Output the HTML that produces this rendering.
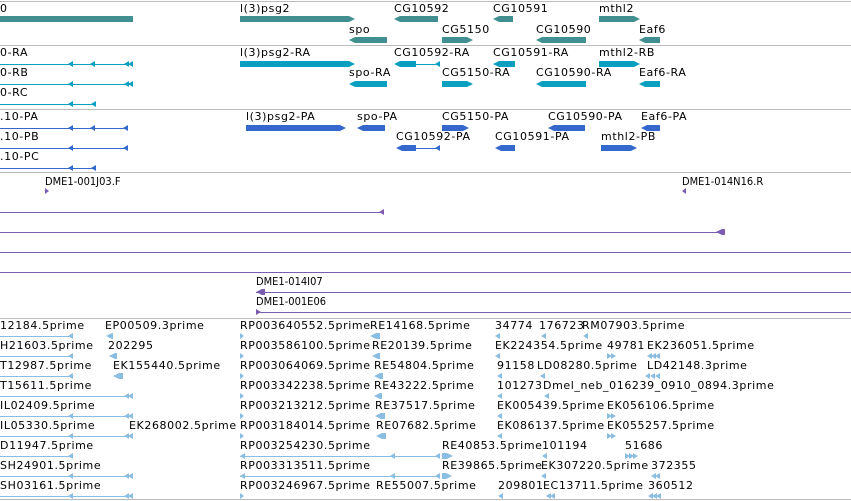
<!DOCTYPE html>
<html><head><style>
body{margin:0;width:851px;height:501px;overflow:hidden;background:#fff;position:relative;font-family:"DejaVu Sans","Liberation Sans",sans-serif}
.t{position:absolute;font-size:11px;line-height:13px;letter-spacing:.6px;white-space:nowrap;color:#000}
.s{position:absolute;font-size:11px;line-height:13px;letter-spacing:0;white-space:nowrap;color:#000;transform:scaleX(.9);transform-origin:left}
.h{position:absolute;left:0;width:851px;height:1px;background:#bbb}
.l{position:absolute;height:1px}
.b{position:absolute}
.L{clip-path:polygon(6px 0,100% 0,100% 100%,6px 100%,0 50%)}
.R{clip-path:polygon(0 0,calc(100% - 6px) 0,100% 50%,calc(100% - 6px) 100%,0 100%)}
.al{position:absolute;width:0;height:0;border-top:3px solid transparent;border-bottom:3px solid transparent;border-right:5px solid}
.ar{position:absolute;width:0;height:0;border-top:3px solid transparent;border-bottom:3px solid transparent;border-left:5px solid}
.g{background:#418f90}.c{background:#0ca0c0}.u{background:#3468cc}.p{background:#7a5cb0}.e{background:#8abde2}
</style></head><body>
<div class="h" style="top:1px"></div>
<div class="h" style="top:45px"></div>
<div class="h" style="top:109px"></div>
<div class="h" style="top:172px"></div>
<div class="h" style="top:318px"></div>
<div class="h" style="top:499px"></div>

<div class="t" style="left:0;top:2px">0</div>
<div class="b g" style="left:0;top:16px;width:133px;height:6px"></div>
<div class="t" style="left:240px;top:2px">l(3)psg2</div>
<div class="b g R" style="left:240px;top:16px;width:115px;height:6px"></div>
<div class="t" style="left:349px;top:23px">spo</div>
<div class="b g L" style="left:349px;top:37px;width:38px;height:6px"></div>
<div class="t" style="left:394px;top:2px">CG10592</div>
<div class="b g L" style="left:394px;top:16px;width:44px;height:6px"></div>
<div class="t" style="left:442px;top:23px">CG5150</div>
<div class="b g R" style="left:442px;top:37px;width:31px;height:6px"></div>
<div class="t" style="left:493px;top:2px">CG10591</div>
<div class="b g L" style="left:493px;top:16px;width:20px;height:6px"></div>
<div class="t" style="left:536px;top:23px">CG10590</div>
<div class="b g L" style="left:536px;top:37px;width:50px;height:6px"></div>
<div class="t" style="left:599px;top:2px">mthl2</div>
<div class="b g R" style="left:599px;top:16px;width:41px;height:6px"></div>
<div class="t" style="left:639px;top:23px">Eaf6</div>
<div class="b g L" style="left:639px;top:37px;width:21px;height:6px"></div>

<div class="t" style="left:0;top:46px">0-RA</div>
<div class="l c" style="left:0;top:64px;width:133px"></div>
<div class="al" style="left:68px;top:61px;color:#0ca0c0"></div><div class="al" style="left:90px;top:61px;color:#0ca0c0"></div><div class="al" style="left:124px;top:61px;color:#0ca0c0"></div><div class="al" style="left:128px;top:61px;color:#0ca0c0"></div>
<div class="t" style="left:0;top:66px">0-RB</div>
<div class="l c" style="left:0;top:84px;width:133px"></div>
<div class="al" style="left:68px;top:81px;color:#0ca0c0"></div><div class="al" style="left:124px;top:81px;color:#0ca0c0"></div><div class="al" style="left:128px;top:81px;color:#0ca0c0"></div>
<div class="t" style="left:0;top:86px">0-RC</div>
<div class="l c" style="left:0;top:104px;width:96px"></div>
<div class="al" style="left:68px;top:101px;color:#0ca0c0"></div><div class="al" style="left:91px;top:101px;color:#0ca0c0"></div>
<div class="t" style="left:240px;top:46px">l(3)psg2-RA</div>
<div class="b c R" style="left:240px;top:61px;width:115px;height:6px"></div>
<div class="t" style="left:349px;top:66px">spo-RA</div>
<div class="b c L" style="left:349px;top:81px;width:38px;height:6px"></div>
<div class="t" style="left:394px;top:46px">CG10592-RA</div>
<div class="b c L" style="left:394px;top:61px;width:22px;height:6px"></div>
<div class="l c" style="left:410px;top:64px;width:30px"></div><div class="al" style="left:435px;top:61px;color:#0ca0c0"></div>
<div class="t" style="left:442px;top:66px">CG5150-RA</div>
<div class="b c R" style="left:442px;top:81px;width:31px;height:6px"></div>
<div class="t" style="left:493px;top:46px">CG10591-RA</div>
<div class="b c L" style="left:493px;top:61px;width:22px;height:6px"></div>
<div class="t" style="left:536px;top:66px">CG10590-RA</div>
<div class="b c L" style="left:536px;top:81px;width:50px;height:6px"></div>
<div class="t" style="left:599px;top:46px">mthl2-RB</div>
<div class="b c R" style="left:599px;top:61px;width:41px;height:6px"></div>
<div class="t" style="left:639px;top:66px">Eaf6-RA</div>
<div class="b c L" style="left:639px;top:81px;width:21px;height:6px"></div>

<div class="t" style="left:0;top:110px">.10-PA</div>
<div class="l u" style="left:0;top:128px;width:128px"></div>
<div class="al" style="left:68px;top:125px;color:#3468cc"></div><div class="al" style="left:90px;top:125px;color:#3468cc"></div><div class="al" style="left:123px;top:125px;color:#3468cc"></div>
<div class="t" style="left:0;top:130px">.10-PB</div>
<div class="l u" style="left:0;top:148px;width:128px"></div>
<div class="al" style="left:68px;top:145px;color:#3468cc"></div><div class="al" style="left:123px;top:145px;color:#3468cc"></div>
<div class="t" style="left:0;top:150px">.10-PC</div>
<div class="l u" style="left:0;top:168px;width:96px"></div>
<div class="al" style="left:68px;top:165px;color:#3468cc"></div><div class="al" style="left:91px;top:165px;color:#3468cc"></div>
<div class="t" style="left:246px;top:110px">l(3)psg2-PA</div>
<div class="b u R" style="left:246px;top:125px;width:100px;height:6px"></div>
<div class="t" style="left:357px;top:110px">spo-PA</div>
<div class="b u L" style="left:357px;top:125px;width:28px;height:6px"></div>
<div class="t" style="left:442px;top:110px">CG5150-PA</div>
<div class="b u R" style="left:442px;top:125px;width:27px;height:6px"></div>
<div class="t" style="left:548px;top:110px">CG10590-PA</div>
<div class="b u L" style="left:548px;top:125px;width:37px;height:6px"></div>
<div class="t" style="left:641px;top:110px">Eaf6-PA</div>
<div class="b u L" style="left:641px;top:125px;width:19px;height:6px"></div>
<div class="t" style="left:396px;top:130px">CG10592-PA</div>
<div class="b u L" style="left:396px;top:145px;width:20px;height:6px"></div>
<div class="l u" style="left:410px;top:148px;width:30px"></div><div class="al" style="left:435px;top:145px;color:#3468cc"></div>
<div class="t" style="left:495px;top:130px">CG10591-PA</div>
<div class="b u L" style="left:495px;top:145px;width:20px;height:6px"></div>
<div class="t" style="left:601px;top:130px">mthl2-PB</div>
<div class="b u R" style="left:601px;top:145px;width:36px;height:6px"></div>

<div class="s" style="left:45px;top:175px">DME1-001J03.F</div>
<div class="ar" style="left:45px;top:188px;color:#7a5cb0;border-left-width:4px"></div>
<div class="s" style="left:682px;top:175px">DME1-014N16.R</div>
<div class="al" style="left:682px;top:188px;color:#7a5cb0;border-right-width:4px"></div>
<div class="l p" style="left:0;top:212px;width:384px"></div><div class="al" style="left:379px;top:209px;color:#7a5cb0"></div>
<div class="l p" style="left:0;top:232px;width:725px"></div><div class="b p L" style="left:716px;top:229px;width:9px;height:6px"></div>
<div class="l p" style="left:0;top:252px;width:851px"></div>
<div class="l p" style="left:0;top:272px;width:851px"></div>
<div class="s" style="left:256px;top:275px">DME1-014I07</div>
<div class="l p" style="left:256px;top:292px;width:595px"></div><div class="b p L" style="left:256px;top:289px;width:9px;height:6px"></div>
<div class="s" style="left:256px;top:295px">DME1-001E06</div>
<div class="l p" style="left:256px;top:312px;width:595px"></div><div class="ar" style="left:256px;top:309px;color:#7a5cb0"></div>

<div class="t" style="left:0;top:319px">12184.5prime</div>
<div class="t" style="left:0;top:339px">H21603.5prime</div>
<div class="t" style="left:0;top:359px">T12987.5prime</div>
<div class="t" style="left:0;top:379px">T15611.5prime</div>
<div class="t" style="left:0;top:399px">IL02409.5prime</div>
<div class="t" style="left:0;top:419px">IL05330.5prime</div>
<div class="t" style="left:0;top:439px">D11947.5prime</div>
<div class="t" style="left:0;top:459px">SH24901.5prime</div>
<div class="t" style="left:0;top:479px">SH03161.5prime</div>
<div class="l e" style="left:0;top:336px;width:73px"></div><div class="al" style="left:68px;top:333px;color:#8abde2"></div>
<div class="l e" style="left:0;top:356px;width:73px"></div><div class="al" style="left:68px;top:353px;color:#8abde2"></div>
<div class="l e" style="left:0;top:376px;width:73px"></div><div class="al" style="left:68px;top:373px;color:#8abde2"></div>
<div class="l e" style="left:0;top:396px;width:133px"></div><div class="al" style="left:124px;top:393px;color:#8abde2"></div><div class="al" style="left:128px;top:393px;color:#8abde2"></div>
<div class="l e" style="left:0;top:416px;width:133px"></div><div class="al" style="left:68px;top:413px;color:#8abde2"></div><div class="al" style="left:124px;top:413px;color:#8abde2"></div><div class="al" style="left:128px;top:413px;color:#8abde2"></div>
<div class="l e" style="left:0;top:436px;width:133px"></div><div class="al" style="left:68px;top:433px;color:#8abde2"></div><div class="al" style="left:124px;top:433px;color:#8abde2"></div><div class="al" style="left:128px;top:433px;color:#8abde2"></div>
<div class="l e" style="left:0;top:456px;width:73px"></div><div class="al" style="left:68px;top:453px;color:#8abde2"></div>
<div class="l e" style="left:0;top:476px;width:133px"></div><div class="al" style="left:68px;top:473px;color:#8abde2"></div><div class="al" style="left:124px;top:473px;color:#8abde2"></div><div class="al" style="left:128px;top:473px;color:#8abde2"></div>
<div class="l e" style="left:0;top:496px;width:133px"></div><div class="al" style="left:68px;top:493px;color:#8abde2"></div><div class="al" style="left:124px;top:493px;color:#8abde2"></div><div class="al" style="left:128px;top:493px;color:#8abde2"></div>

<div class="t" style="left:105px;top:319px">EP00509.3prime</div><div class="b e L" style="left:106px;top:333px;width:7px;height:6px"></div>
<div class="t" style="left:108px;top:339px">202295</div><div class="b e L" style="left:109px;top:353px;width:8px;height:6px"></div>
<div class="t" style="left:113px;top:359px">EK155440.5prime</div><div class="b e L" style="left:113px;top:373px;width:10px;height:6px"></div>
<div class="t" style="left:129px;top:419px">EK268002.5prime</div>

<div class="t" style="left:240px;top:319px">RP003640552.5prime</div>
<div class="t" style="left:240px;top:339px">RP003586100.5prime</div>
<div class="t" style="left:240px;top:359px">RP003064069.5prime</div>
<div class="t" style="left:240px;top:379px">RP003342238.5prime</div>
<div class="t" style="left:240px;top:399px">RP003213212.5prime</div>
<div class="t" style="left:240px;top:419px">RP003184014.5prime</div>
<div class="t" style="left:240px;top:439px">RP003254230.5prime</div>
<div class="t" style="left:240px;top:459px">RP003313511.5prime</div>
<div class="t" style="left:240px;top:479px">RP003246967.5prime</div>
<div class="ar" style="left:240px;top:333px;color:#8abde2;border-left-width:4px"></div>
<div class="ar" style="left:240px;top:353px;color:#8abde2;border-left-width:4px"></div>
<div class="ar" style="left:240px;top:373px;color:#8abde2;border-left-width:4px"></div>
<div class="ar" style="left:240px;top:393px;color:#8abde2;border-left-width:4px"></div>
<div class="ar" style="left:240px;top:413px;color:#8abde2;border-left-width:4px"></div>
<div class="ar" style="left:240px;top:433px;color:#8abde2;border-left-width:4px"></div>
<div class="ar" style="left:240px;top:493px;color:#8abde2;border-left-width:4px"></div>
<div class="l e" style="left:240px;top:456px;width:200px"></div><div class="al" style="left:240px;top:453px;color:#8abde2"></div><div class="al" style="left:390px;top:453px;color:#8abde2"></div><div class="al" style="left:435px;top:453px;color:#8abde2"></div>
<div class="l e" style="left:240px;top:476px;width:200px"></div><div class="al" style="left:240px;top:473px;color:#8abde2"></div><div class="al" style="left:390px;top:473px;color:#8abde2"></div><div class="al" style="left:435px;top:473px;color:#8abde2"></div>
<div class="b e R" style="left:442px;top:453px;width:11px;height:6px"></div>
<div class="b e R" style="left:442px;top:473px;width:10px;height:6px"></div>

<div class="t" style="left:370px;top:319px">RE14168.5prime</div><div class="b e L" style="left:370px;top:333px;width:10px;height:6px"></div>
<div class="t" style="left:372px;top:339px">RE20139.5prime</div><div class="b e L" style="left:372px;top:353px;width:8px;height:6px"></div>
<div class="t" style="left:374px;top:359px">RE54804.5prime</div><div class="b e L" style="left:374px;top:373px;width:9px;height:6px"></div>
<div class="t" style="left:374px;top:379px">RE43222.5prime</div><div class="b e L" style="left:374px;top:393px;width:8px;height:6px"></div>
<div class="t" style="left:375px;top:399px">RE37517.5prime</div><div class="b e L" style="left:375px;top:413px;width:10px;height:6px"></div>
<div class="t" style="left:376px;top:419px">RE07682.5prime</div><div class="b e L" style="left:376px;top:433px;width:10px;height:6px"></div>
<div class="t" style="left:442px;top:439px">RE40853.5prime</div>
<div class="t" style="left:442px;top:459px">RE39865.5prime</div>
<div class="t" style="left:376px;top:479px">RE55007.5prime</div>

<div class="t" style="left:495px;top:319px">34774</div><div class="al" style="left:495px;top:333px;color:#8abde2"></div>
<div class="t" style="left:539px;top:319px">176723</div><div class="al" style="left:541px;top:333px;color:#8abde2"></div>
<div class="t" style="left:582px;top:319px">RM07903.5prime</div><div class="al" style="left:583px;top:333px;color:#8abde2"></div>
<div class="t" style="left:495px;top:339px">EK224354.5prime</div><div class="al" style="left:495px;top:353px;color:#8abde2"></div>
<div class="t" style="left:607px;top:339px">49781</div><div class="ar" style="left:607px;top:353px;color:#8abde2"></div><div class="ar" style="left:611px;top:353px;color:#8abde2"></div>
<div class="t" style="left:647px;top:339px">EK236051.5prime</div><div class="al" style="left:647px;top:353px;color:#8abde2"></div><div class="al" style="left:651px;top:353px;color:#8abde2"></div><div class="al" style="left:655px;top:353px;color:#8abde2"></div>
<div class="t" style="left:497px;top:359px">91158</div><div class="al" style="left:497px;top:373px;color:#8abde2"></div>
<div class="t" style="left:537px;top:359px">LD08280.5prime</div><div class="al" style="left:540px;top:373px;color:#8abde2"></div>
<div class="t" style="left:647px;top:359px">LD42148.3prime</div><div class="al" style="left:645px;top:373px;color:#8abde2"></div><div class="al" style="left:650px;top:373px;color:#8abde2"></div><div class="al" style="left:655px;top:373px;color:#8abde2"></div>
<div class="t" style="left:497px;top:379px">101273</div><div class="al" style="left:497px;top:393px;color:#8abde2"></div>
<div class="t" style="left:543px;top:379px">Dmel_neb_016239_0910_0894.3prime</div><div class="al" style="left:544px;top:393px;color:#8abde2"></div>
<div class="t" style="left:497px;top:399px">EK005439.5prime</div><div class="al" style="left:497px;top:413px;color:#8abde2"></div>
<div class="t" style="left:607px;top:399px">EK056106.5prime</div><div class="ar" style="left:607px;top:413px;color:#8abde2"></div><div class="ar" style="left:611px;top:413px;color:#8abde2"></div>
<div class="t" style="left:497px;top:419px">EK086137.5prime</div><div class="al" style="left:497px;top:433px;color:#8abde2"></div>
<div class="t" style="left:607px;top:419px">EK055257.5prime</div><div class="ar" style="left:607px;top:433px;color:#8abde2"></div><div class="ar" style="left:611px;top:433px;color:#8abde2"></div>
<div class="t" style="left:542px;top:439px">101194</div><div class="al" style="left:542px;top:453px;color:#8abde2"></div>
<div class="t" style="left:625px;top:439px">51686</div><div class="ar" style="left:625px;top:453px;color:#8abde2"></div><div class="ar" style="left:629px;top:453px;color:#8abde2"></div><div class="ar" style="left:633px;top:453px;color:#8abde2"></div>
<div class="t" style="left:541px;top:459px">EK307220.5prime</div><div class="al" style="left:541px;top:473px;color:#8abde2"></div>
<div class="t" style="left:651px;top:459px">372355</div><div class="al" style="left:651px;top:473px;color:#8abde2"></div><div class="al" style="left:655px;top:473px;color:#8abde2"></div>
<div class="t" style="left:498px;top:479px">209801</div><div class="al" style="left:498px;top:493px;color:#8abde2"></div>
<div class="t" style="left:543px;top:479px">EC13711.5prime</div><div class="al" style="left:546px;top:493px;color:#8abde2"></div><div class="al" style="left:550px;top:493px;color:#8abde2"></div>
<div class="t" style="left:648px;top:479px">360512</div><div class="al" style="left:648px;top:493px;color:#8abde2"></div><div class="al" style="left:652px;top:493px;color:#8abde2"></div><div class="al" style="left:656px;top:493px;color:#8abde2"></div>
</body></html>
